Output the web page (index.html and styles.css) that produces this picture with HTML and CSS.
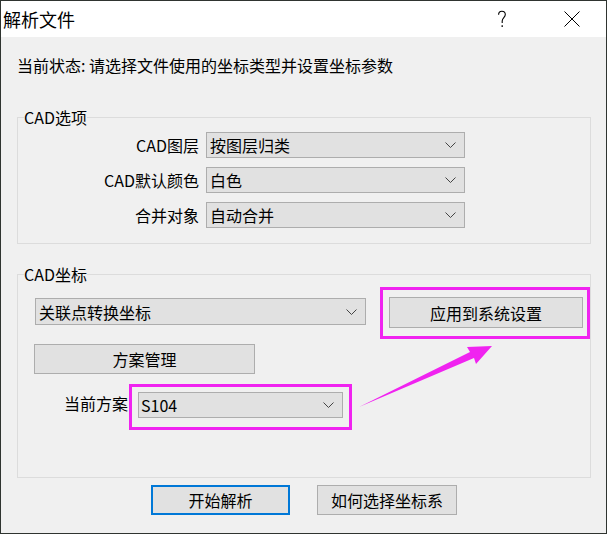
FILE: index.html
```html
<!DOCTYPE html>
<html lang="zh-CN">
<head>
<meta charset="utf-8">
<title>解析文件</title>
<link rel="stylesheet" href="styles.css">
</head>
<body>
<div class="window">
  <div class="titlebar">
    <span class="title">解析文件</span>
    <svg class="help-icon" width="10" height="18" viewBox="0 0 10 18">
      <path d="M1.6 4.8 C1.6 2.4 3 1.2 4.9 1.2 C6.9 1.2 8.3 2.5 8.3 4.5 C8.3 7.3 5.2 7.9 5.2 11 V13" fill="none" stroke="#000" stroke-width="1.1"/>
      <rect x="4.5" y="15.3" width="1.4" height="1.6" fill="#000"/>
    </svg>
    <svg class="close-icon" width="16" height="16" viewBox="0 0 16 16">
      <path d="M0.5 0.5 L15.5 15.5 M15.5 0.5 L0.5 15.5" stroke="#000" stroke-width="1"/>
    </svg>
  </div>
  <div class="content">
    <p class="status">当前状态: 请选择文件使用的坐标类型并设置坐标参数</p>

    <fieldset class="group group-options">
      <legend>CAD选项</legend>
      <div class="form-grid">
        <span class="field-label">CAD图层</span>
        <div class="combo"><span>按图层归类</span><svg class="chevron" width="11" height="6" viewBox="0 0 11 6"><path d="M0.5 0.5 L5.5 5.5 L10.5 0.5" fill="none" stroke="#444" stroke-width="1"/></svg></div>
        <span class="field-label">CAD默认颜色</span>
        <div class="combo"><span>白色</span><svg class="chevron" width="11" height="6" viewBox="0 0 11 6"><path d="M0.5 0.5 L5.5 5.5 L10.5 0.5" fill="none" stroke="#444" stroke-width="1"/></svg></div>
        <span class="field-label">合并对象</span>
        <div class="combo"><span>自动合并</span><svg class="chevron" width="11" height="6" viewBox="0 0 11 6"><path d="M0.5 0.5 L5.5 5.5 L10.5 0.5" fill="none" stroke="#444" stroke-width="1"/></svg></div>
      </div>
    </fieldset>

    <fieldset class="group group-coords">
      <legend>CAD坐标</legend>
      <div class="coord-row">
        <div class="combo combo-wide"><span>关联点转换坐标</span><svg class="chevron" width="11" height="6" viewBox="0 0 11 6"><path d="M0.5 0.5 L5.5 5.5 L10.5 0.5" fill="none" stroke="#444" stroke-width="1"/></svg></div>
        <button class="btn btn-apply">应用到系统设置</button>
      </div>
      <button class="btn btn-scheme">方案管理</button>
      <div class="scheme-row">
        <span class="scheme-label">当前方案</span>
        <div class="combo combo-scheme"><span>S104</span><svg class="chevron" width="11" height="6" viewBox="0 0 11 6"><path d="M0.5 0.5 L5.5 5.5 L10.5 0.5" fill="none" stroke="#444" stroke-width="1"/></svg></div>
      </div>
    </fieldset>

    <div class="actions">
      <button class="btn btn-default">开始解析</button>
      <button class="btn btn-help">如何选择坐标系</button>
    </div>
  </div>

  <div class="highlight highlight-apply"></div>
  <div class="highlight highlight-scheme"></div>
  <svg class="arrow" width="605" height="532" viewBox="0 0 605 532">
    <polygon points="358,406 469,351 466,346 491,345 475,363 473,357" fill="#f023f0"/>
  </svg>
</div>
</body>
</html>
```

FILE: styles.css
```css
* {
  box-sizing: border-box;
}

html, body {
  margin: 0;
  padding: 0;
}

body {
  font-family: "Noto Sans CJK SC", "Noto Sans", sans-serif;
  color: #000;
  background: #f0f0f0;
}

.window {
  position: relative;
  width: 607px;
  height: 534px;
  border: 1px solid #2f3430;
  background: #f0f0f0;
  overflow: hidden;
}

.titlebar {
  height: 36px;
  background: #fff;
  display: flex;
  align-items: center;
  padding: 0 26px 0 2px;
}

.title {
  font-size: 18px;
  line-height: 24px;
}

.help-icon {
  margin-left: auto;
  display: block;
}

.close-icon {
  margin-left: 57px;
  display: block;
}

.content {
  padding: 18px 15px 0 16px;
}

.status {
  margin: 0;
  font-size: 16px;
  line-height: 20px;
}

.group {
  width: 574px;
  margin: 0;
  border: 1px solid #dcdcdc;
  min-width: 0;
}

.group legend {
  margin-left: 6px;
  padding: 0;
  font-size: 16px;
  line-height: 19px;
}

.group-options {
  margin-top: 33px;
  padding: 5px 0 15px;
}

.group-coords {
  margin-top: 21px;
  padding: 13px 0 59px;
}

.form-grid {
  display: grid;
  grid-template-columns: 181px 259px;
  column-gap: 7px;
  row-gap: 9px;
  align-items: center;
}

.field-label {
  text-align: right;
  font-size: 16px;
  line-height: 20px;
}

.combo {
  height: 26px;
  border: 1px solid #adadad;
  background: #e1e1e1;
  display: flex;
  align-items: center;
  justify-content: space-between;
  padding: 0 8px 0 3px;
  font-size: 16px;
  line-height: 20px;
}

.chevron {
  display: block;
  flex: none;
}

.coord-row {
  display: flex;
  align-items: flex-start;
  padding-left: 17px;
}

.combo-wide {
  width: 331px;
  height: 27px;
  margin-top: 1px;
}

.btn {
  font-family: inherit;
  font-size: 16px;
  line-height: 20px;
  color: #000;
  background: #e1e1e1;
  border: 1px solid #adadad;
  padding: 0;
  margin: 0;
  border-radius: 0;
}

.btn-apply {
  width: 194px;
  height: 31px;
  margin-left: 23px;
}

.btn-scheme {
  display: block;
  width: 221px;
  height: 30px;
  margin: 16px 0 0 16px;
}

.scheme-row {
  display: flex;
  align-items: center;
  margin-top: 18px;
  padding-left: 46px;
}

.scheme-label {
  width: 64px;
  font-size: 16px;
  line-height: 20px;
  margin-bottom: 4px;
}

.combo-scheme {
  width: 205px;
  margin-left: 10px;
  padding-left: 2px;
}

.actions {
  display: flex;
  justify-content: center;
  gap: 27px;
  margin-top: 7px;
}

.btn-default {
  width: 139px;
  height: 30px;
  border: 2px solid #0078d7;
}

.btn-help {
  width: 140px;
  height: 30px;
}

.highlight {
  position: absolute;
  border: 3px solid #f023f0;
  pointer-events: none;
}

.highlight-apply {
  left: 379px;
  top: 286px;
  width: 210px;
  height: 52px;
}

.highlight-scheme {
  left: 128px;
  top: 383px;
  width: 223px;
  height: 46px;
}

.arrow {
  position: absolute;
  left: 0;
  top: 0;
  pointer-events: none;
}
```
